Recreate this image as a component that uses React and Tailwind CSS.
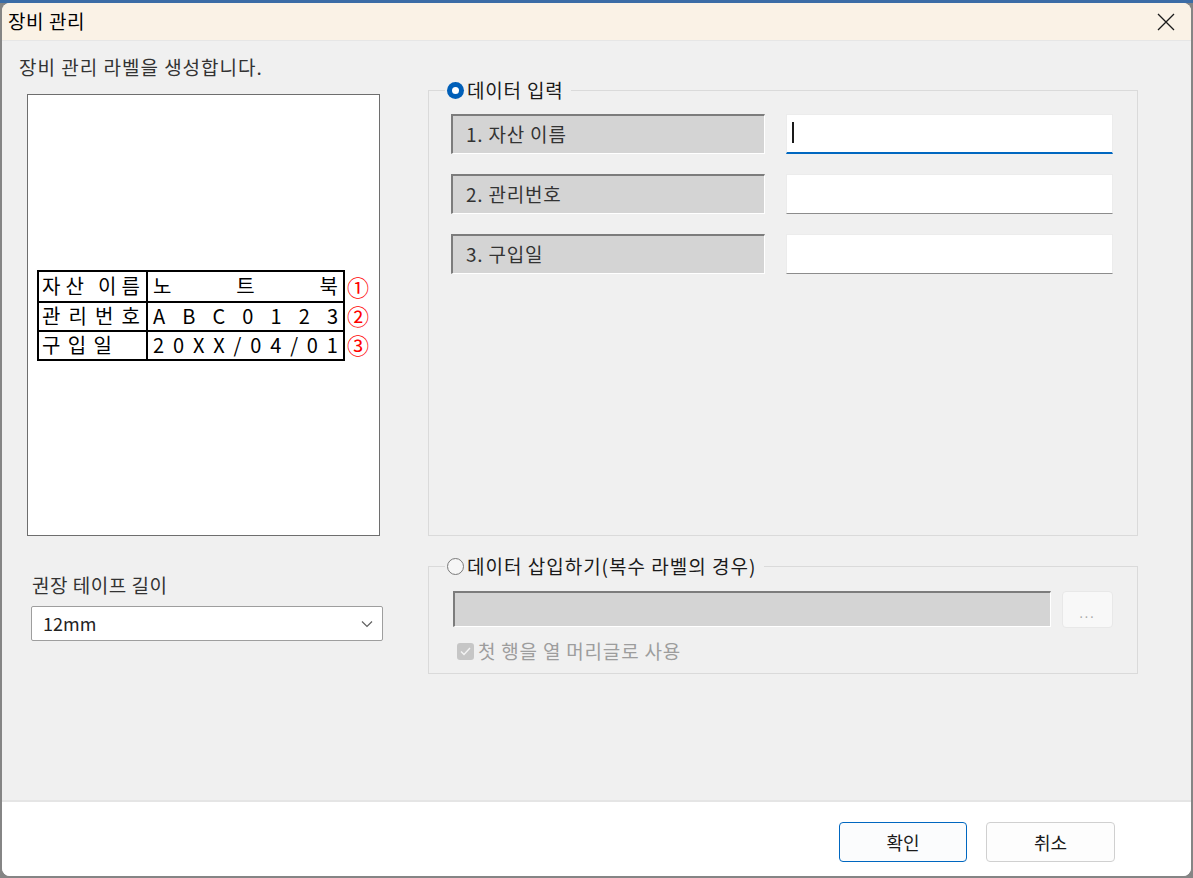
import React from "react";

const font = "font-['Noto_Sans_CJK_KR','Malgun_Gothic',sans-serif]";

const Spread = ({ text, className = "" }) => (
    <div className={`flex justify-between items-center ${className}`}>
        {text.split("").map((ch, i) => (
            <span key={i} className={ch === " " ? "w-[4px]" : ""}>
                {ch === " " ? "" : ch}
            </span>
        ))}
    </div>
);

const LabelPreview = () => {
    const rows = [
        { key: "자산 이름", keyCls: "pr-[6px]", val: "노트북", mark: "①" },
        { key: "관리번호", keyCls: "pr-[6px]", val: "ABC0123", mark: "②" },
        { key: "구입일", keyCls: "pr-[34px]", val: "20XX/04/01", mark: "③" },
    ];
    return (
        <div className="flex items-center">
            <div className="border-2 border-black text-[20px] leading-none text-black">
                {rows.map((r, i) => (
                    <div
                        key={r.key}
                        className={`flex h-[29px] ${i > 0 ? "border-t-2 border-black" : ""}`}
                    >
                        <div className={`w-[107px] pl-[3px] flex items-center ${r.keyCls}`}>
                            <Spread text={r.key} className="w-full" />
                        </div>
                        <div className="w-[197px] border-l-2 border-black flex items-center px-[5px]">
                            <Spread text={r.val} className="w-full" />
                        </div>
                    </div>
                ))}
            </div>
            <div className="flex flex-col text-[#ff0000] text-[22px] leading-[29px] ml-[2px] pt-[1px]">
                {rows.map((r) => (
                    <span key={r.mark}>{r.mark}</span>
                ))}
            </div>
        </div>
    );
};

const Radio = ({ checked }) =>
    checked ? (
        <span className="w-[17px] h-[17px] rounded-full bg-[#005fb8] flex items-center justify-center">
            <span className="w-[7px] h-[7px] rounded-full bg-white" />
        </span>
    ) : (
        <span className="w-[17px] h-[17px] rounded-full border border-[#7a7a7a] bg-[#f6f6f6]" />
    );

const FieldLabel = ({ children }) => (
    <div className="w-[314px] h-[40px] bg-[#d4d4d4] border-t-2 border-l-2 border-[#7c7c7c] border-b border-r border-b-white border-r-white flex items-center pl-[13px] text-[19px] tracking-[0.8px] text-[#333]">
        {children}
    </div>
);

const FieldInput = ({ focused }) => (
    <div
        className={`w-[327px] h-[40px] bg-white border border-[#ececec] flex items-center pl-[5px] ${
            focused ? "border-b-2 border-b-[#0067c0]" : "border-b border-b-[#8c8c8c]"
        }`}
    >
        {focused && <span className="w-[2px] h-[21px] bg-[#1a1a1a] -mt-[2px]" />}
    </div>
);

export default function App() {
    return (
        <div className={`w-[1193px] h-[878px] bg-[#858585] flex flex-col ${font}`}>
            <div className="h-[3px] bg-[#3b6ca6] shrink-0" />
            <div className="mx-[2px] mb-[2px] flex-1 flex flex-col rounded-t-[8px] rounded-b-[8px] overflow-hidden bg-white">
                {/* title bar */}
                <div className="h-[37px] bg-[#faf2e6] flex items-center justify-between pl-[6px] pr-[16px] shrink-0">
                    <span className="text-[19px] tracking-[0.6px] text-black">장비 관리</span>
                    <svg width="18" height="18" viewBox="0 0 18 18" className="mt-[1px]">
                        <path d="M1 1L17 17M17 1L1 17" stroke="#1a1a1a" strokeWidth="1.3" />
                    </svg>
                </div>
                <div className="h-[1px] bg-[#e6e6e6]" />

                {/* body */}
                <div className="h-[759px] bg-[#f0f0f0] flex pl-[17px] shrink-0">
                    <div className="w-[364px] flex flex-col pt-[14px]">
                        <p className="text-[19px] leading-[24px] text-[#333] tracking-[1px]">
                            장비 관리 라벨을 생성합니다.
                        </p>
                        <div className="ml-[8px] mt-[15px] w-[353px] h-[442px] bg-white border border-[#6e6e6e] flex items-center pl-[9px]">
                            <LabelPreview />
                        </div>
                        <p className="ml-[13px] mt-[37px] text-[19px] leading-[24px] text-[#333] tracking-[0.5px]">
                            권장 테이프 길이
                        </p>
                        <div className="ml-[12px] mt-[9px] w-[352px] h-[35px] bg-white border border-[#9e9e9e] rounded-[2px] flex items-center justify-between pl-[11px] pr-[9px]">
                            <span className="text-[18px] text-[#222]">12mm</span>
                            <svg width="12" height="8" viewBox="0 0 12 8">
                                <path d="M1 1.5L6 6.5L11 1.5" fill="none" stroke="#606060" strokeWidth="1.2" />
                            </svg>
                        </div>
                    </div>

                    <div className="ml-[45px] flex flex-col pt-[49px]">
                        {/* group 1 */}
                        <div className="relative w-[710px] h-[446px] border border-[#dadada] pl-[22px] pt-[23px] flex flex-col gap-[20px]">
                            <div className="absolute -top-[13px] left-[16px] bg-[#f0f0f0] flex items-center gap-[3px] pl-[2px] pr-[8px] h-[24px]">
                                <Radio checked />
                                <span className="text-[19px] tracking-[0.8px] text-[#1a1a1a]">데이터 입력</span>
                            </div>
                            {["1. 자산 이름", "2. 관리번호", "3. 구입일"].map((t, i) => (
                                <div key={t} className="flex gap-[21px]">
                                    <FieldLabel>{t}</FieldLabel>
                                    <FieldInput focused={i === 0} />
                                </div>
                            ))}
                        </div>

                        {/* group 2 */}
                        <div className="relative mt-[30px] w-[710px] h-[108px] border border-[#dadada] pl-[24px] pt-[24px] flex flex-col">
                            <div className="absolute -top-[13px] left-[16px] bg-[#f0f0f0] flex items-center gap-[3px] pl-[2px] pr-[8px] h-[24px]">
                                <Radio />
                                <span className="text-[19px] tracking-[1px] text-[#1a1a1a]">데이터 삽입하기(복수 라벨의 경우)</span>
                            </div>
                            <div className="flex gap-[11px]">
                                <div className="w-[598px] h-[36px] bg-[#d4d4d4] border-t-2 border-l-2 border-[#7c7c7c] border-b border-r border-b-white border-r-white" />
                                <div className="w-[51px] h-[37px] rounded-[4px] bg-[#f8f8f8] border border-[#e8e8e8] flex items-end justify-center pb-[8px] text-[#a8a8a8] text-[12px] leading-none tracking-[2px]">
                                    ...
                                </div>
                            </div>
                            <div className="flex items-center mt-[12px] ml-[4px] gap-[4px]">
                                <span className="w-[17px] h-[17px] rounded-[3px] bg-[#c6c6c6] flex items-center justify-center">
                                    <svg width="11" height="9" viewBox="0 0 11 9">
                                        <path d="M1 4.5L4 7.5L10 1" fill="none" stroke="#f4f4f4" strokeWidth="1.4" />
                                    </svg>
                                </span>
                                <span className="text-[19px] tracking-[0.8px] text-[#9d9d9d] leading-[22px]">첫 행을 열 머리글로 사용</span>
                            </div>
                        </div>
                    </div>
                </div>

                <div className="h-[2px] bg-[#e5e5e5] shrink-0" />

                {/* footer */}
                <div className="flex-1 bg-white flex justify-end items-start pt-[20px] pr-[76px] gap-[19px]">
                    <button className="w-[128px] h-[40px] rounded-[4px] bg-[#fbfcfd] border border-[#0067c0] text-[18px] text-[#1a1a1a]">
                        확인
                    </button>
                    <button className="w-[129px] h-[40px] rounded-[4px] bg-[#fdfdfd] border border-[#d0d0d0] text-[18px] text-[#1a1a1a]">
                        취소
                    </button>
                </div>
            </div>
        </div>
    );
}
